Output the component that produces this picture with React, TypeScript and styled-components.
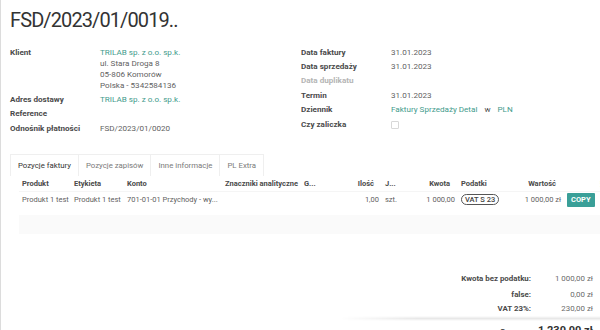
import styled, { createGlobalStyle } from "styled-components";

const GlobalStyle = createGlobalStyle`
  html, body {
    margin: 0;
    padding: 0;
    background: #fff;
  }
  body {
    font-family: Roboto, "Liberation Sans", sans-serif;
    color: #4c4c4c;
    overflow: hidden;
  }
`;

const Sheet = styled.div`
  width: 600px;
  height: 330px;
  box-sizing: border-box;
  border-left: 1px solid #dcdcdc;
  padding: 8px 0 0 9px;
  overflow: hidden;
`;

const Title = styled.h1`
  margin: 0;
  font-size: 20px;
  font-weight: 400;
  color: #333;
  line-height: 24px;
  letter-spacing: -0.9px;
`;

const Groups = styled.div`
  display: grid;
  grid-template-columns: 291px 1fr;
  margin-top: 13px;
`;

const Group = styled.div`
  display: flex;
  flex-direction: column;
`;

const Row = styled.div<{ $labelWidth: number }>`
  display: grid;
  grid-template-columns: ${(p) => p.$labelWidth}px 1fr;
  padding: 1.7px 0;
  font-size: 8.1px;
  line-height: 11px;
`;

const Label = styled.div<{ $muted?: boolean }>`
  font-weight: 700;
  color: ${(p) => (p.$muted ? "#b5b5b5" : "#4a4a4a")};
`;

const Value = styled.div`
  color: #5f5f5f;
  display: flex;
  flex-direction: column;
`;

const Inline = styled.div`
  display: flex;
  align-items: center;
  gap: 7px;
`;

const Link = styled.span`
  color: #3f9b8c;
`;

const Checkbox = styled.span`
  display: inline-block;
  width: 6px;
  height: 6px;
  border: 1px solid #d8d8d8;
  border-radius: 1px;
  margin-top: 2px;
`;

const Notebook = styled.div`
  margin-top: 18px;
`;

const TabBar = styled.div`
  display: flex;
  height: 22px;
`;

const Tab = styled.div<{ $active?: boolean }>`
  display: flex;
  align-items: center;
  padding: 0 7px;
  font-size: 7.8px;
  color: ${(p) => (p.$active ? "#333" : "#7a7a7a")};
  border: 1px solid #efefef;
  border-bottom: none;
  border-left-width: ${(p) => (p.$active ? "1px" : "0")};
  background: #fff;
`;

const cols =
  "52px 53px 98px 79px 33px 48px 32px 44px 41px 65px 30px 20px";

const Table = styled.div`
  margin-left: 9px;
  font-size: 7.5px;
`;

const HeadRow = styled.div`
  display: grid;
  grid-template-columns: ${cols};
  height: 15px;
  align-items: center;
  border-bottom: 1px solid #f5f5f5;
`;

const BodyRow = styled.div`
  display: grid;
  grid-template-columns: ${cols};
  height: 16px;
  align-items: center;
  color: #5f5f5f;
`;

const FillerRow = styled.div`
  height: 19px;
  margin-top: 7px;
  background: #fafafa;
`;

const Th = styled.div<{ $right?: boolean }>`
  font-weight: 700;
  color: #4a4a4a;
  padding: 0 ${(p) => (p.$right ? "8px" : "3px")} 0 3px;
  text-align: ${(p) => (p.$right ? "right" : "left")};
  white-space: nowrap;
  overflow: hidden;
`;

const Td = styled.div<{ $right?: boolean }>`
  padding: 0 3px;
  text-align: ${(p) => (p.$right ? "right" : "left")};
  white-space: nowrap;
  overflow: visible;
`;

const Badge = styled.span`
  display: inline-block;
  border: 1px solid #555;
  border-radius: 7px;
  padding: 0 3px;
  line-height: 9px;
  color: #444;
  font-weight: 500;
`;

const CopyButton = styled.span`
  display: inline-block;
  background: #3a9f98;
  color: #fff;
  font-weight: 700;
  font-size: 7.5px;
  line-height: 14px;
  padding: 0 4px;
  border-radius: 1px;
`;

const Totals = styled.div`
  margin-top: 39px;
  display: grid;
  grid-template-columns: 1fr 61px;
  justify-items: end;
  padding-right: 7px;
  font-size: 7.9px;
`;

const TotalLabel = styled.div<{ $gap: number }>`
  font-weight: 700;
  color: #4a4a4a;
  padding-top: ${(p) => p.$gap}px;
  line-height: 11px;
  padding-right: 1px;
`;

const TotalValue = styled.div<{ $gap: number }>`
  color: #6a6a6a;
  padding-top: ${(p) => p.$gap}px;
  line-height: 11px;
`;

const Divider = styled.div`
  margin: 2px 0 0 330px;
  height: 5px;
  background: linear-gradient(
    to bottom,
    rgba(0, 0, 0, 0) 0%,
    rgba(0, 0, 0, 0.09) 50%,
    rgba(0, 0, 0, 0) 100%
  );
  mask-image: linear-gradient(to right, transparent 0%, #000 30%, #000 100%);
`;

const SumRow = styled.div`
  display: grid;
  grid-template-columns: 1fr 61px;
  align-items: baseline;
  padding: 3px 7px 0 0;
`;

const SumLabel = styled.div`
  justify-self: end;
  font-size: 8px;
  font-weight: 700;
  color: #4a4a4a;
  padding-right: 9px;
`;

const SumValue = styled.div`
  justify-self: end;
  font-size: 11px;
  font-weight: 700;
  color: #333;
`;

const Kebab = styled.span`
  color: #555;
  font-weight: 700;
`;

export default function App() {
  return (
    <>
      <GlobalStyle />
      <Sheet>
        <Title>FSD/2023/01/0019..</Title>
        <Groups>
          <Group>
            <Row $labelWidth={90}>
              <Label>Klient</Label>
              <Value>
                <Link>TRILAB sp. z o.o. sp.k.</Link>
                <span>ul. Stara Droga 8</span>
                <span>05-806 Komorów</span>
                <span>Polska - 5342584136</span>
              </Value>
            </Row>
            <Row $labelWidth={90}>
              <Label>Adres dostawy</Label>
              <Value>
                <Link>TRILAB sp. z o.o. sp.k.</Link>
              </Value>
            </Row>
            <Row $labelWidth={90}>
              <Label>Reference</Label>
              <Value />
            </Row>
            <Row $labelWidth={90}>
              <Label>Odnośnik płatności</Label>
              <Value>FSD/2023/01/0020</Value>
            </Row>
          </Group>
          <Group>
            <Row $labelWidth={90}>
              <Label>Data faktury</Label>
              <Value>31.01.2023</Value>
            </Row>
            <Row $labelWidth={90}>
              <Label>Data sprzedaży</Label>
              <Value>31.01.2023</Value>
            </Row>
            <Row $labelWidth={90}>
              <Label $muted>Data duplikatu</Label>
              <Value />
            </Row>
            <Row $labelWidth={90}>
              <Label>Termin</Label>
              <Value>31.01.2023</Value>
            </Row>
            <Row $labelWidth={90}>
              <Label>Dziennik</Label>
              <Inline>
                <Link>Faktury Sprzedaży Detal</Link>
                <span>w</span>
                <Link>PLN</Link>
              </Inline>
            </Row>
            <Row $labelWidth={90}>
              <Label>Czy zaliczka</Label>
              <Value>
                <Checkbox />
              </Value>
            </Row>
          </Group>
        </Groups>

        <Notebook>
          <TabBar>
            <Tab $active>Pozycje faktury</Tab>
            <Tab>Pozycje zapisów</Tab>
            <Tab>Inne informacje</Tab>
            <Tab>PL Extra</Tab>
          </TabBar>
          <Table>
            <HeadRow>
              <Th>Produkt</Th>
              <Th>Etykieta</Th>
              <Th>Konto</Th>
              <Th>Znaczniki analityczne</Th>
              <Th>G...</Th>
              <Th $right>Ilość</Th>
              <Th>J...</Th>
              <Th $right>Kwota</Th>
              <Th>Podatki</Th>
              <Th $right>Wartość</Th>
              <Th />
              <Th>
                <Kebab>⋮</Kebab>
              </Th>
            </HeadRow>
            <BodyRow>
              <Td>Produkt 1 test</Td>
              <Td>Produkt 1 test</Td>
              <Td>701-01-01 Przychody - wy...</Td>
              <Td />
              <Td />
              <Td $right>1,00</Td>
              <Td>szt.</Td>
              <Td $right>1 000,00</Td>
              <Td>
                <Badge>VAT S 23</Badge>
              </Td>
              <Td $right>1 000,00 zł</Td>
              <Td>
                <CopyButton>COPY</CopyButton>
              </Td>
              <Td />
            </BodyRow>
            <FillerRow />
          </Table>
        </Notebook>

        <Totals>
          <TotalLabel $gap={0}>Kwota bez podatku:</TotalLabel>
          <TotalValue $gap={0}>1 000,00 zł</TotalValue>
          <TotalLabel $gap={5}>false:</TotalLabel>
          <TotalValue $gap={5}>0,00 zł</TotalValue>
          <TotalLabel $gap={3}>VAT 23%:</TotalLabel>
          <TotalValue $gap={3}>230,00 zł</TotalValue>
        </Totals>
        <Divider />
        <SumRow>
          <SumLabel>Suma:</SumLabel>
          <SumValue>1 230,00 zł</SumValue>
        </SumRow>
      </Sheet>
    </>
  );
}
